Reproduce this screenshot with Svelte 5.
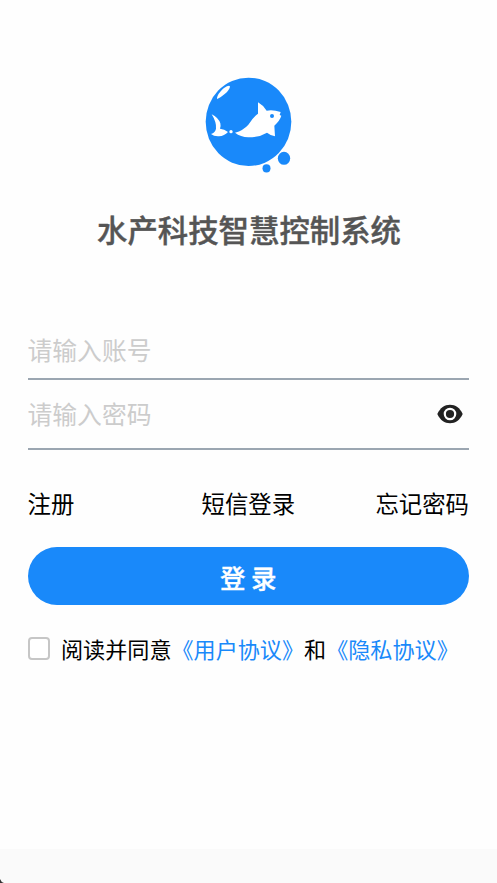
<script lang="ts">
  let account = $state('');
  let password = $state('');
  let showPassword = $state(false);
  let agreed = $state(false);
</script>

<main class="page">
  <header>
    <svg class="logo" viewBox="0 0 330 330" aria-hidden="true">
      <ellipse cx="160.5" cy="155.5" rx="128.5" ry="132.5" fill="#1989fa" />
      <ellipse cx="267" cy="265" rx="18.5" ry="19.5" fill="#1989fa" />
      <ellipse cx="214.5" cy="295" rx="12" ry="12.5" fill="#1989fa" />
      <path d="M66 87C65 78 75 64 87 54Q104 43 105 50Q103 60 89 72Q75 84 66 87Z" fill="#fff" />
      <path d="M50 133Q70 143 76 160Q78 168 75 176Q88 177 99 186Q88 198 72 199Q57 200 48 192Q61 187 63 176Q65 157 50 133Z" fill="#fff" />
      <circle cx="108" cy="185" r="5" fill="#fff" />
      <path d="M120 188Q145 181 160 164Q176 140 189 131L189 97Q205 106 215 122Q233 118 257 126L254 135L259 137Q255 151 238 167L240 199Q226 196 216 188Q193 202 160 202Q137 201 120 188Z" fill="#fff" />
      <circle cx="231" cy="138" r="6" fill="#1989fa" />
    </svg>
    <h1>水产科技智慧控制系统</h1>
  </header>

  <form onsubmit={(event) => event.preventDefault()}>
    <label class="field">
      <input type="text" placeholder="请输入账号" aria-label="账号" bind:value={account} />
    </label>
    <div class="field password">
      <input type={showPassword ? 'text' : 'password'} placeholder="请输入密码" aria-label="密码" bind:value={password} />
      <button type="button" class="eye" aria-label="显示密码" onclick={() => (showPassword = !showPassword)}>
        <svg viewBox="0 0 26 20" aria-hidden="true">
          <path d="M.3 10C3.2 3.8 7.5.8 13 .8S22.8 3.8 25.7 10C22.8 16.2 18.5 19.2 13 19.2S3.2 16.2.3 10Z" fill="#222" />
          <circle cx="13" cy="10" r="5.2" fill="#222" stroke="#fff" stroke-width="2.2" />
        </svg>
      </button>
    </div>

    <nav>
      <a href="#register">注册</a>
      <a href="#sms">短信登录</a>
      <a href="#forgot">忘记密码</a>
    </nav>

    <button class="submit" type="submit">登 录</button>

    <div class="agreement">
      <input type="checkbox" aria-label="阅读并同意" bind:checked={agreed} />
      <p>阅读并同意<a href="#terms">《用户协议》</a>和<a href="#privacy">《隐私协议》</a></p>
    </div>
  </form>

  <footer><svg viewBox="0 0 4 4" aria-hidden="true"><path d="M0 0Q1 3 4 4H0Z" fill="#333" /></svg></footer>
</main>

<style>
  :global(body) { margin: 0; background: #fff; }
  .page { display: flex; flex-direction: column; box-sizing: border-box; height: 883px; padding-top: 70px; overflow: hidden; background: #fefefe; color: #000; font-family: "Noto Sans CJK SC", sans-serif; }
  header { display: flex; flex-direction: column; align-items: center; }
  .logo { display: block; width: 110px; height: 110px; margin-left: 3px; }
  h1 { margin: 27px 0 0 1px; color: #555; font-size: 30.4px; font-weight: 500; line-height: 44px; -webkit-text-stroke: .4px #555; }
  form { display: flex; flex-direction: column; margin: 71px 28px 0 27.5px; }
  .field { display: flex; align-items: center; box-sizing: border-box; height: 58px; border-bottom: 2px solid #9ba6b1; }
  .field.password { height: 70px; }
  .field input { flex: 1; min-width: 0; height: 44px; margin-bottom: 3px; padding: 0; border: 0; outline: 0; background: transparent; color: #111; font: 400 24.8px "Noto Sans CJK SC", sans-serif; }
  .field input::placeholder { color: #ccc; opacity: 1; }
  .eye { width: 26px; height: 20px; margin: 0 6px 1px 0; padding: 0; border: 0; background: none; cursor: pointer; }
  .eye svg { display: block; width: 26px; height: 20px; }
  a { color: inherit; text-decoration: none; }
  nav { display: flex; justify-content: space-between; margin-top: 34px; font-size: 23.4px; line-height: 38px; }
  nav a:nth-child(2) { margin-left: 47px; }
  .submit { height: 58px; margin-top: 25px; padding: 0; border: 0; border-radius: 29px; background: #1989fa; color: #fff; cursor: pointer; font: 500 25.5px "Noto Sans CJK SC", sans-serif; -webkit-text-stroke: .3px #fff; }
  .agreement { display: flex; align-items: flex-start; margin-top: 24px; }
  .agreement input { flex: none; box-sizing: border-box; width: 22px; height: 23px; margin: 8px 11.5px 0 0; border: 2px solid #c6c6c6; border-radius: 4px; background: #fff; appearance: none; }
  .agreement input:checked { border-color: #1989fa; background: #1989fa; }
  .agreement p { margin: 0; font-size: 22.1px; line-height: 38px; white-space: nowrap; }
  .agreement a { color: #1989fa; }
  footer { display: flex; align-items: flex-end; height: 34px; margin-top: auto; background: #fafafa; }
  footer svg { display: block; width: 4px; height: 4px; }
</style>
